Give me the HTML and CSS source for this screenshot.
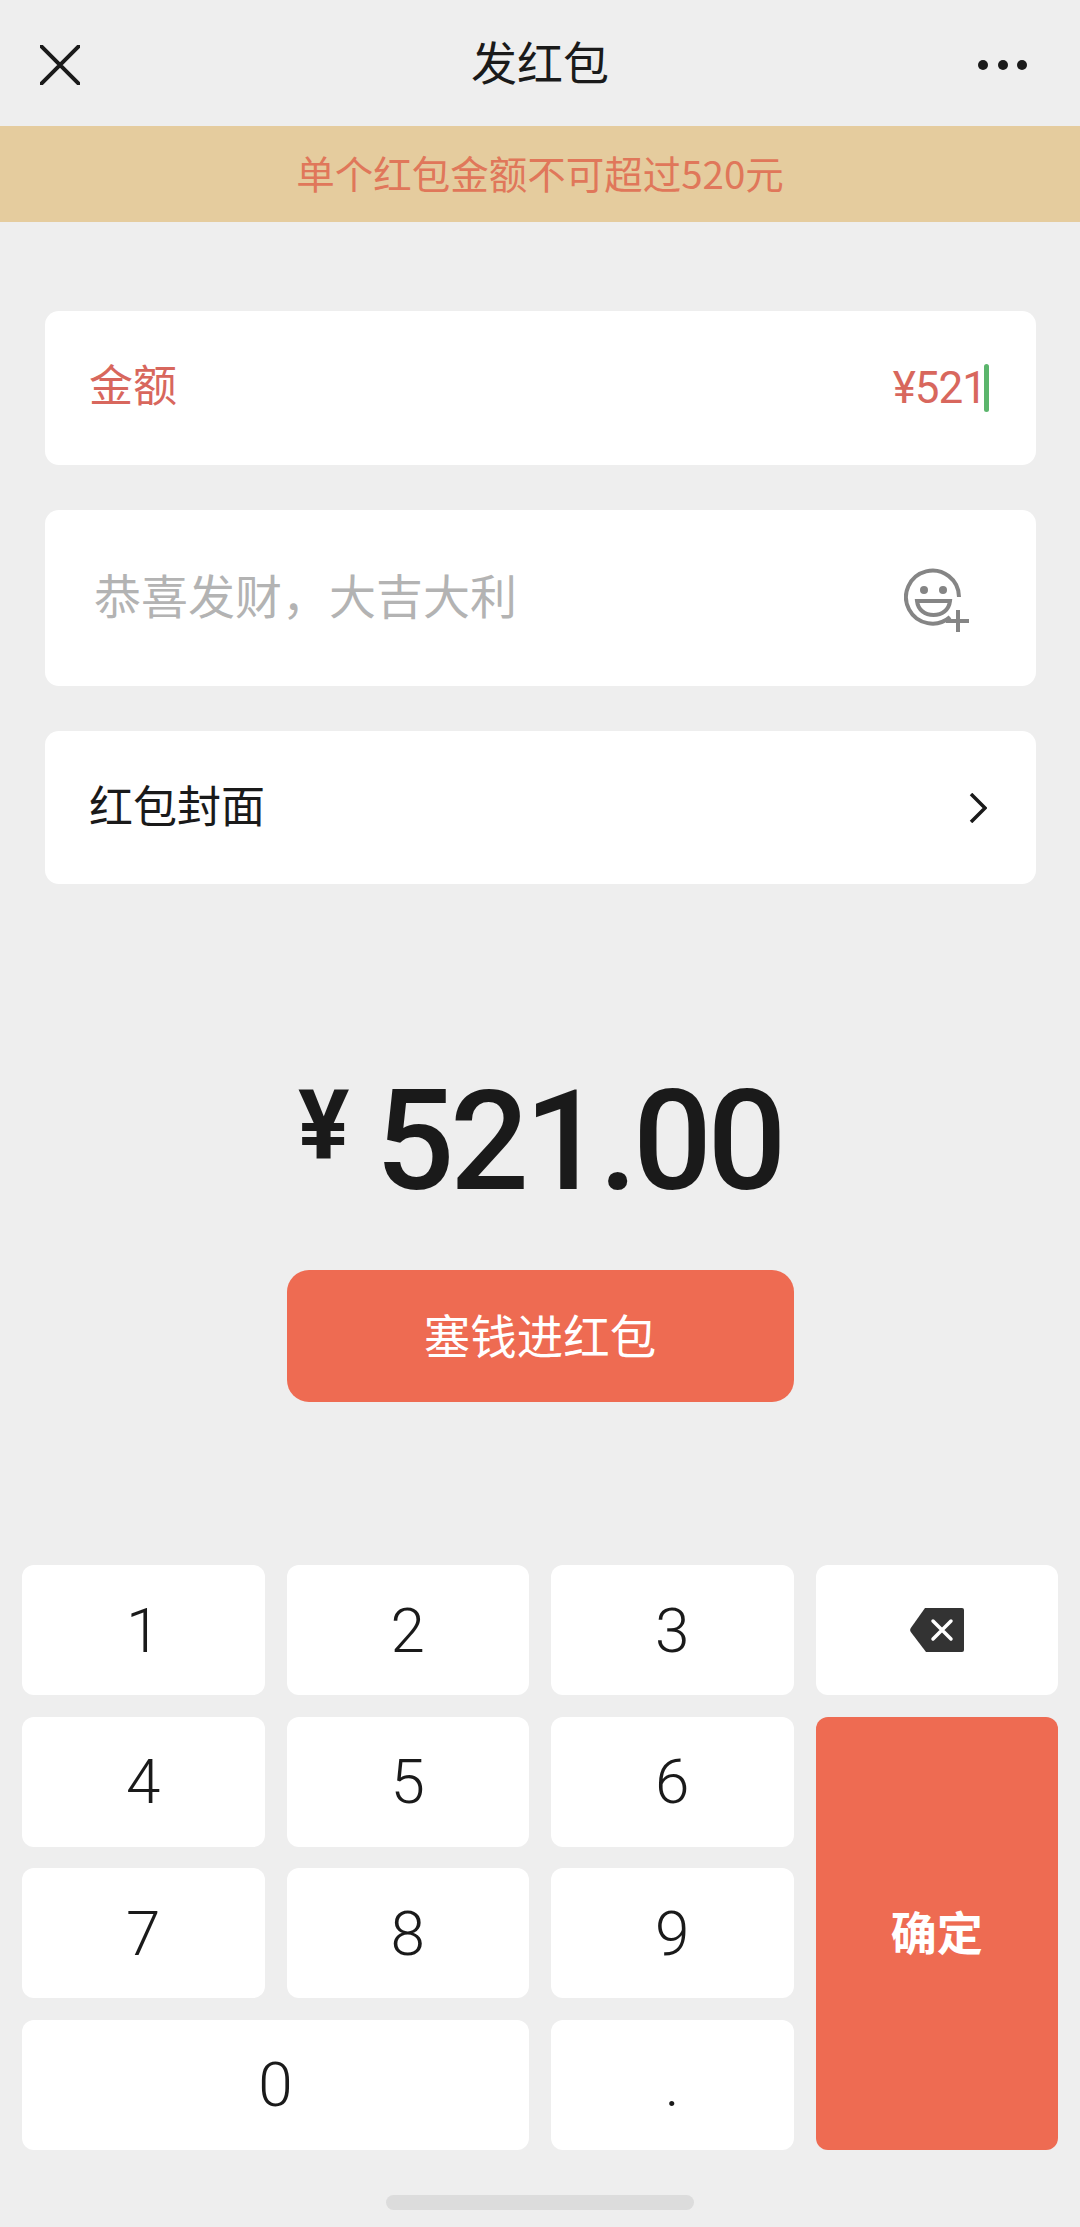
FILE: index.html
```html
<!DOCTYPE html>
<html lang="zh-CN">
<head>
<meta charset="utf-8">
<title>发红包</title>
<link rel="stylesheet" href="styles.css">
</head>
<body>
<div class="page">
  <header class="topbar">
    <svg class="icon-close" viewBox="0 0 40 40" width="40" height="40"><path d="M1 1L39 39M39 1L1 39"/></svg>
    <h1 class="title">发红包</h1>
    <svg class="icon-more" viewBox="0 0 50 10" width="50" height="10"><circle cx="5" cy="5" r="5"/><circle cx="25" cy="5" r="5"/><circle cx="44" cy="5" r="5"/></svg>
  </header>
  <div class="notice">单个红包金额不可超过520元</div>
  <main class="form">
    <div class="card card-amount">
      <span class="label-error">金额</span>
      <span class="value-error"><span class="value-text">¥521</span><i class="caret"></i></span>
    </div>
    <div class="card card-wish">
      <span class="placeholder">恭喜发财，大吉大利</span>
      <svg class="icon-emoji" viewBox="0 0 66 66" width="66" height="66">
        <path class="line" d="M46 49A26.5 26.5 0 1 1 55 29"/>
        <circle class="fill" cx="20" cy="22" r="4"/><circle class="fill" cx="39" cy="22" r="4"/>
        <path class="line" d="M13 33H46C45 42 38 47 29.500 47C21 47 14 42 13 33Z"/>
        <path class="line" d="M42 53H65M54 42V64"/>
      </svg>
    </div>
    <div class="card card-cover">
      <span class="cover-text">红包封面</span>
      <svg class="icon-chevron" viewBox="0 0 18 30" width="18" height="30"><path d="M2 1L16 15L2 29"/></svg>
    </div>
  </main>
  <div class="total"><span class="total-sign">¥</span><span class="total-num">521.00</span></div>
  <button class="pay"><span class="pay-text">塞钱进红包</span></button>
  <section class="keypad">
    <div class="key">1</div><div class="key">2</div><div class="key">3</div>
    <div class="key">
      <svg class="icon-back" viewBox="0 0 54 44" width="54" height="44"><path class="shape" d="M15 0H52A2 2 0 0 1 54 2V42A2 2 0 0 1 52 44H16L0.800 24Q-0.500 22 0.800 20Z"/><path class="cross" d="M23 13L41 31M41 13L23 31"/></svg>
    </div>
    <div class="key">4</div><div class="key">5</div><div class="key">6</div>
    <div class="key key-ok"><span class="ok-text">确定</span></div>
    <div class="key">7</div><div class="key">8</div><div class="key">9</div>
    <div class="key key-zero">0</div><div class="key">.</div>
  </section>
  <div class="homebar"></div>
</div>
</body>
</html>
```
FILE: styles.css
```css
* { box-sizing: border-box; }
html, body { margin: 0; padding: 0; }
body { background: #eeeeee; font-family: "Noto Sans CJK SC", "Noto Sans", sans-serif; color: #1a1a1a; }
.page { width: 1080px; height: 2227px; display: flex; flex-direction: column; overflow: hidden; }

.topbar { height: 126px; display: flex; align-items: center; justify-content: space-between; padding: 4px 52px 0 40px; position: relative; }
.title { position: absolute; left: 0; right: 0; top: 0; margin: 0; text-align: center; font-size: 46px; font-weight: 400; line-height: 121px; }
.icon-close { stroke: #1a1a1a; stroke-width: 4; stroke-linecap: round; fill: none; }
.icon-more { fill: #1a1a1a; }

.notice { height: 96px; background: #e5cc9e; color: #e0775a; font-size: 38.500px; line-height: 92px; text-align: center; }

.form { margin: 89px 44px 0 45px; display: flex; flex-direction: column; gap: 45px; }
.card { background: #fff; border-radius: 14px; display: flex; align-items: center; justify-content: space-between; }
.card-amount { height: 154px; padding: 0 47px 0 44px; }
.card-wish { height: 176px; padding: 0 66px 0 49px; }
.card-cover { height: 153px; padding: 0 49px 0 44px; }

.label-error { font-size: 44px; color: #d8675d; margin-bottom: 10px; }
.value-error { display: flex; align-items: center; }
.value-text { font-family: Roboto, sans-serif; font-size: 44px; color: #d8675d; letter-spacing: -1px; }
.caret { width: 5px; height: 48px; border-radius: 3px; background: #5bb56c; margin-left: -2px; }
.placeholder { font-size: 47px; color: #b3b3b3; margin-bottom: 9px; }
.cover-text { font-size: 44px; color: #1a1a1a; margin-bottom: 8px; }
.icon-emoji { margin-top: 5px; }
.icon-emoji .line { fill: none; stroke: #858585; stroke-width: 4; }
.icon-emoji .fill { fill: #858585; }
.icon-chevron { fill: none; stroke: #1a1a1a; stroke-width: 3.500; }

.total { margin-top: 193px; height: 130px; display: flex; justify-content: center; align-items: flex-start; gap: 26px; font-family: Roboto, sans-serif; font-weight: 700; color: #1a1a1a; }
.total-sign { font-size: 96px; line-height: 96px; }
.total-num { font-size: 139px; line-height: 130px; letter-spacing: -4.500px; font-weight: 500; }

.pay { display: block; margin: 63px auto 0; width: 507px; height: 132px; border: 0; border-radius: 22px; background: #ee6b52; color: #fff; font-family: inherit; font-size: 46.500px; letter-spacing: 0; }
.pay-text { display: block; margin-bottom: 5px; }

.keypad { margin: 163px 22px 0; display: grid; grid-template-columns: repeat(4, 242.500px); grid-template-rows: repeat(4, 130px); column-gap: 22px; row-gap: 21.670px; }
.key { background: #fff; border-radius: 12px; display: flex; align-items: center; justify-content: center; font-family: Roboto, sans-serif; font-weight: 350; font-size: 62px; color: #1a1a1a; }
.key-ok { grid-column: 4; grid-row: 2 / span 3; background: #ee6b52; color: #fff; font-family: "Noto Sans CJK SC", sans-serif; font-size: 46px; font-weight: 700; }
.ok-text { margin-bottom: 6px; }
.key-zero { grid-column: 1 / span 2; }
.icon-back .shape { fill: #333; }
.icon-back .cross { stroke: #fff; stroke-width: 3.500; stroke-linecap: round; fill: none; }

.homebar { margin: 45px auto 0; width: 308px; height: 15px; border-radius: 8px; background: #dcdcdc; }
```
